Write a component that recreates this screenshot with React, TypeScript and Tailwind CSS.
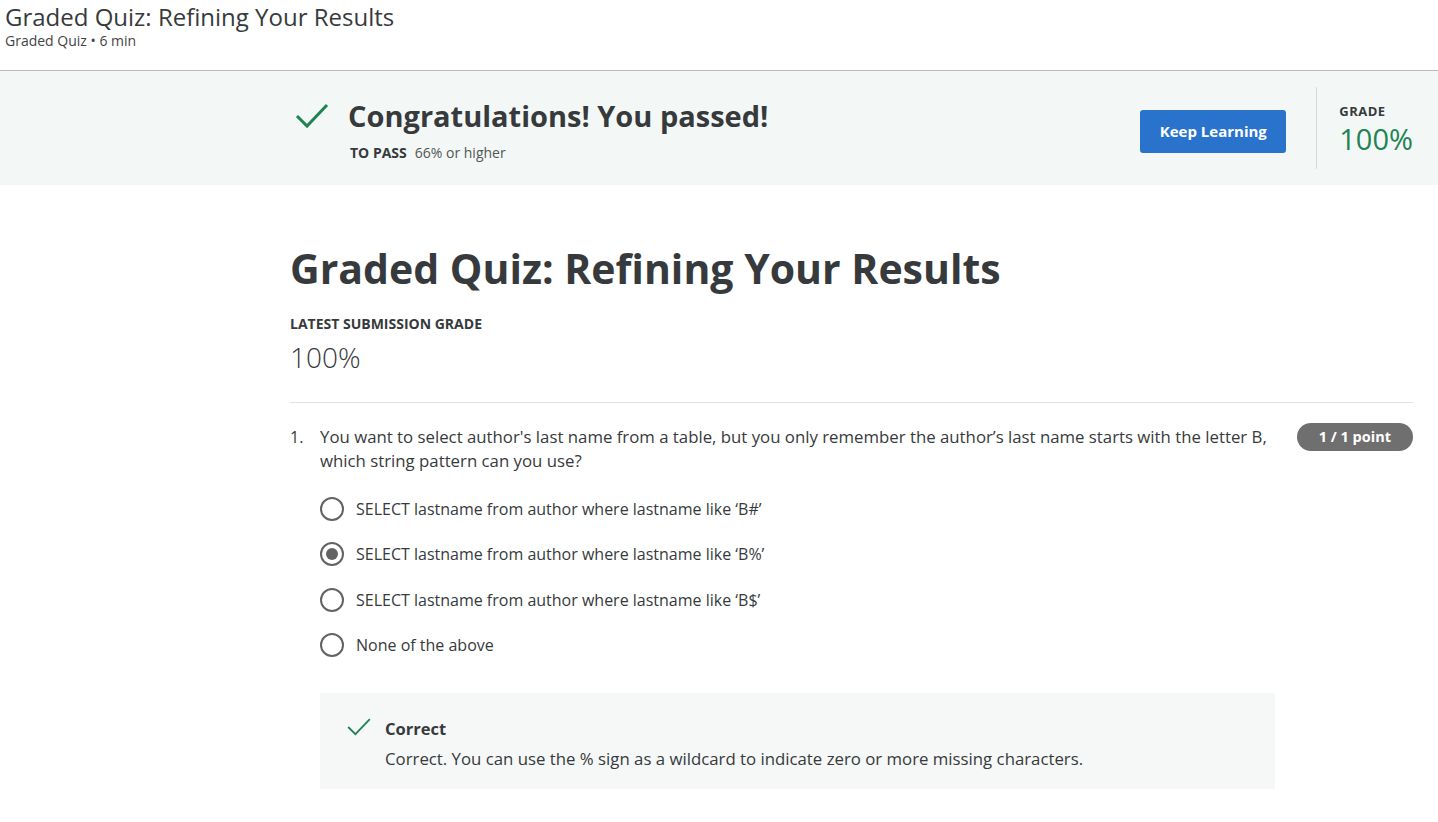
import React from "react";

const Check = ({ size = 36, sw = 3 }: { size?: number; sw?: number }) => (
  <svg width={size} height={size} viewBox="0 0 36 36" fill="none">
    <path d="M3 18 L13 28 L33 7" stroke="#1f8354" strokeWidth={sw} strokeLinecap="butt" strokeLinejoin="miter" />
  </svg>
);

const Radio = ({ checked }: { checked?: boolean }) => (
  <div className="w-[24px] h-[24px] rounded-full border-2 border-[#636363] flex items-center justify-center shrink-0">
    {checked && <div className="w-[12px] h-[12px] rounded-full bg-[#636363]" />}
  </div>
);

export default function App() {
  const options = [
    "SELECT lastname from author where lastname like \u2018B#\u2019",
    "SELECT lastname from author where lastname like \u2018B%\u2019",
    "SELECT lastname from author where lastname like \u2018B$\u2019",
    "None of the above",
  ];
  return (
    <div className="min-h-[822px] bg-white text-[#373a3c]" style={{ fontFamily: '"Open Sans", "Noto Sans", sans-serif' }}>
      <div className="h-[71px] px-[5px] pt-[1px] border-b border-[#b8b8b8]">
        <div className="text-[24px] leading-[31px] text-[#373a3c]">Graded Quiz: Refining Your Results</div>
        <div className="text-[14px] leading-[18px] text-[#444]">Graded Quiz • 6 min</div>
      </div>
      <div className="h-[114px] bg-[#f3f8f7] flex items-center pl-[290px] pr-[25px]">
        <div className="flex flex-1 items-start">
          <div className="mt-[3px] ml-[4px] mr-[18px]"><Check size={36} sw={3} /></div>
          <div className="mt-[2px]">
            <div className="text-[29px] leading-[38px] font-bold text-[#373a3c]">Congratulations! You passed!</div>
            <div className="mt-[9px] ml-[2px] text-[14px] leading-[18px]">
              <span className="font-bold mr-[8px]">TO PASS</span>
              <span className="text-[#555]">66% or higher</span>
            </div>
          </div>
        </div>
        <button className="mt-[6px] w-[146px] h-[43px] bg-[#2a73cc] text-white text-[15px] font-bold rounded-[3px] mr-[30px]">Keep Learning</button>
        <div className="h-[82px] border-l border-[#d8dcdc] pl-[22px] flex flex-col justify-center">
          <div className="mt-[2px] text-[13px] font-bold leading-[16px] tracking-[0.5px] text-[#373a3c]">GRADE</div>
          <div className="mt-[4px] text-[29px] leading-[32px] text-[#1f8354]">100%</div>
        </div>
      </div>
      <div className="pl-[290px] pr-[25px]">
        <h1 className="mt-[58px] text-[41px] leading-[50px] font-bold text-[#373a3c]">Graded Quiz: Refining Your Results</h1>
        <div className="mt-[22px] text-[14px] leading-[18px] font-bold text-[#373a3c]">LATEST SUBMISSION GRADE</div>
        <div className="mt-[6px] text-[28px] leading-[36px] font-light text-[#373a3c]">100%</div>
        <div className="mt-[27px] border-t border-[#e1e1e1]" />
        <div className="mt-[22px] flex">
          <div className="w-[30px] text-[16px] leading-[24px]">1.</div>
          <div className="flex-1">
            <div className="flex items-start">
              <div className="flex-1 text-[16.8px] leading-[24px] pr-[20px]">
                You want to select author's last name from a table, but you only remember the author’s last name starts with the letter B, which string pattern can you use?
              </div>
              <div className="mt-[-2px] h-[28px] px-[22px] rounded-full bg-[#6f6f6f] text-white text-[14.5px] font-bold flex items-center">1 / 1 point</div>
            </div>
            <div className="mt-[24px] flex flex-col gap-[21.3px]">
              {options.map((o, i) => (
                <div key={i} className="flex items-center gap-[12px] h-[24px]">
                  <Radio checked={i === 1} />
                  <span className="text-[16px] leading-[24px] text-[#373a3c]">{o}</span>
                </div>
              ))}
            </div>
            <div className="mt-[36px] w-[955px] h-[96px] bg-[#f5f8f7] pl-[26px] pt-[24px]">
              <div className="flex items-start">
                <div className="mt-[-3px] mr-[13px]"><Check size={26} sw={2.5} /></div>
                <div>
                  <div className="text-[16.5px] leading-[24px] font-bold">Correct</div>
                  <div className="mt-[6px] text-[16.8px] leading-[24px] text-[#373a3c]">Correct. You can use the % sign as a wildcard to indicate zero or more missing characters.</div>
                </div>
              </div>
            </div>
          </div>
        </div>
      </div>
    </div>
  );
}
